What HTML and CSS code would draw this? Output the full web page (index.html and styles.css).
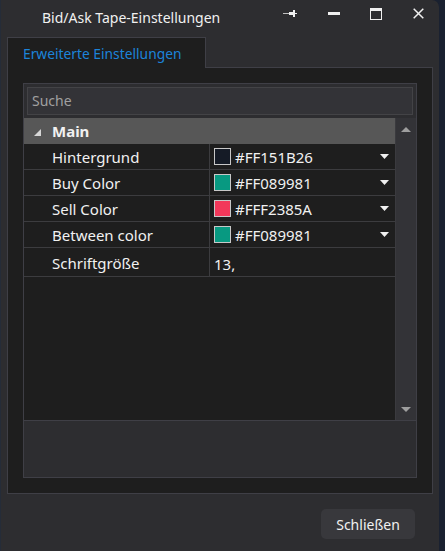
FILE: index.html
```html
<!DOCTYPE html>
<html lang="de">
<head>
<meta charset="utf-8">
<title>Bid/Ask Tape-Einstellungen</title>
<link rel="stylesheet" href="styles.css">
</head>
<body>
<div class="window">
  <div class="titlebar">
    <div class="title">Bid/Ask Tape-Einstellungen</div>
    <div class="tb-btn tb-pin">
      <svg width="14" height="7" viewBox="0 0 14 7"><rect x="0" y="3" width="6" height="1" fill="#bfbfbf"/><rect x="6" y="2" width="5" height="3" fill="#f0f0f0"/><rect x="10" y="0" width="2" height="7" fill="#f0f0f0"/><rect x="12" y="3" width="2" height="1" fill="#f0f0f0"/></svg>
    </div>
    <div class="tb-btn">
      <svg width="12" height="3" viewBox="0 0 12 3"><rect x="0" y="0" width="12" height="3" fill="#f0f0f0"/></svg>
    </div>
    <div class="tb-btn">
      <svg width="12" height="12" viewBox="0 0 12 12"><rect x="0.5" y="0.5" width="11" height="11" fill="none" stroke="#f0f0f0" stroke-width="1"/><rect x="0" y="0" width="12" height="3" fill="#f0f0f0"/></svg>
    </div>
    <div class="tb-btn">
      <svg width="11" height="11" viewBox="0 0 11 11"><path d="M0.7 0.7 L10.3 10.3 M10.3 0.7 L0.7 10.3" stroke="#f0f0f0" stroke-width="1.5"/></svg>
    </div>
  </div>

  <div class="tabstrip">
    <div class="tab">Erweiterte Einstellungen</div>
  </div>
  <div class="panel">
    <div class="grid">
      <div class="search-area">
        <div class="search">Suche</div>
      </div>
      <div class="list">
        <div class="rows">
          <div class="category">
            <svg class="expander" width="7" height="7" viewBox="0 0 7 7"><polygon points="7,0 7,7 0,7" fill="#d6d6d6"/></svg>
            <span>Main</span>
          </div>
          <div class="row">
            <div class="name">Hintergrund</div>
            <div class="value">
              <span class="swatch" style="background:#151B26"></span><span class="hex">#FF151B26</span>
              <svg class="dd" width="9" height="5" viewBox="0 0 9 5"><polygon points="0,0 9,0 4.5,5" fill="#f0f0f0"/></svg>
            </div>
          </div>
          <div class="row">
            <div class="name">Buy Color</div>
            <div class="value">
              <span class="swatch" style="background:#089981"></span><span class="hex">#FF089981</span>
              <svg class="dd" width="9" height="5" viewBox="0 0 9 5"><polygon points="0,0 9,0 4.5,5" fill="#f0f0f0"/></svg>
            </div>
          </div>
          <div class="row">
            <div class="name">Sell Color</div>
            <div class="value">
              <span class="swatch" style="background:#F2385A"></span><span class="hex">#FFF2385A</span>
              <svg class="dd" width="9" height="5" viewBox="0 0 9 5"><polygon points="0,0 9,0 4.5,5" fill="#f0f0f0"/></svg>
            </div>
          </div>
          <div class="row">
            <div class="name">Between color</div>
            <div class="value">
              <span class="swatch" style="background:#089981"></span><span class="hex">#FF089981</span>
              <svg class="dd" width="9" height="5" viewBox="0 0 9 5"><polygon points="0,0 9,0 4.5,5" fill="#f0f0f0"/></svg>
            </div>
          </div>
          <div class="row row-tall">
            <div class="name">Schriftgröße</div>
            <div class="value"><span class="plain">13,</span></div>
          </div>
        </div>
        <div class="scrollbar">
          <svg width="10" height="5" viewBox="0 0 10 5"><polygon points="0,5 10,5 5,0" fill="#9e9e9e"/></svg>
          <svg width="10" height="5" viewBox="0 0 10 5"><polygon points="0,0 10,0 5,5" fill="#9e9e9e"/></svg>
        </div>
      </div>
      <div class="description"></div>
    </div>
  </div>
  <div class="footer">
    <button class="btn">Schließen</button>
  </div>
</div>
</body>
</html>
```

FILE: styles.css
```css
* { box-sizing: border-box; }
html, body { margin: 0; padding: 0; }
body {
  width: 445px;
  height: 551px;
  background: #1a2130;
  font-family: "Noto Sans", "Open Sans", sans-serif;
  color: #f1f1f1;
  overflow: hidden;
}
.window {
  width: 439px;
  height: 551px;
  background: #2d2d30;
  border-top-right-radius: 7px;
  box-shadow: inset 1px 0 0 #252c38;
  display: flex;
  flex-direction: column;
}
.titlebar {
  height: 26px;
  display: flex;
  align-items: center;
}
.title {
  flex: 1;
  padding-left: 42px;
  font-size: 14px;
  color: #f1f1f1;
  line-height: 26px;
  padding-top: 9px;
}
.tb-btn {
  width: 42px;
  height: 26px;
  display: flex;
  align-items: center;
  justify-content: center;
  padding-top: 1px;
}
.tb-pin { width: 46px; }
.tabstrip {
  margin-top: 11px;
  padding-left: 7px;
  display: flex;
}
.tab {
  width: 199px;
  height: 31px;
  background: #1e1e1e;
  border: 1px solid #3f3f46;
  border-bottom: none;
  margin-bottom: -1px;
  position: relative;
  z-index: 1;
  padding-left: 15px;
  padding-top: 2px;
  font-size: 13.8px;
  line-height: 28px;
  color: #1c84da;
}
.panel {
  margin-left: 7px;
  width: 426px;
  height: 427px;
  background: #1e1e1e;
  border: 1px solid #3f3f46;
  padding: 15px;
}
.grid {
  width: 394px;
  height: 395px;
  border: 1px solid #3f3f46;
  background: #2d2d30;
  display: flex;
  flex-direction: column;
}
.search-area {
  padding: 3px;
}
.search {
  height: 28px;
  background: #333337;
  border: 1px solid #434346;
  padding-left: 4px;
  font-size: 14px;
  line-height: 26px;
  color: #a0a0a0;
}
.list {
  height: 303px;
  display: flex;
  background: #1e1e1e;
  border-bottom: 1px solid #3f3f46;
}
.rows {
  width: 371px;
}
.category {
  height: 26px;
  background: #575757;
  display: flex;
  align-items: center;
  font-weight: bold;
  font-size: 15px;
}
.expander {
  margin-left: 10px;
  margin-right: 11px;
  margin-top: 2px;
}
.row {
  height: 26px;
  display: flex;
  border-bottom: 1px solid #3c3c3f;
}
.row:first-of-type { height: 27px; }
.row-tall { height: 29px; }
.name {
  width: 186px;
  border-right: 1px solid #3c3c3f;
  padding-left: 28px;
  font-size: 15px;
  line-height: 26px;
  white-space: nowrap;
}
.row-tall .name { line-height: 30px; }
.value {
  flex: 1;
  display: flex;
  align-items: center;
  padding-left: 4px;
  padding-right: 6px;
  font-size: 15px;
}
.swatch {
  width: 17px;
  height: 17px;
  border: 1px solid #c8c8c8;
  flex: none;
}
.hex {
  margin-left: 4px;
  flex: 1;
}
.plain { margin-top: 3px; }
.dd { flex: none; }
.scrollbar {
  width: 21px;
  background: #333337;
  border-left: 1px solid #3a3a3e;
  display: flex;
  flex-direction: column;
  justify-content: space-between;
  align-items: center;
  padding: 9px 0 8px 0;
}
.description {
  flex: 1;
  background: #2d2d30;
}
.footer {
  display: flex;
  justify-content: flex-end;
  padding-right: 24px;
  margin-top: 15px;
}
.btn {
  width: 94px;
  height: 30px;
  background: #38383c;
  border: none;
  border-radius: 5px;
  color: #f1f1f1;
  font-family: "Noto Sans", "Open Sans", sans-serif;
  font-size: 14px;
  padding: 0;
}
```
